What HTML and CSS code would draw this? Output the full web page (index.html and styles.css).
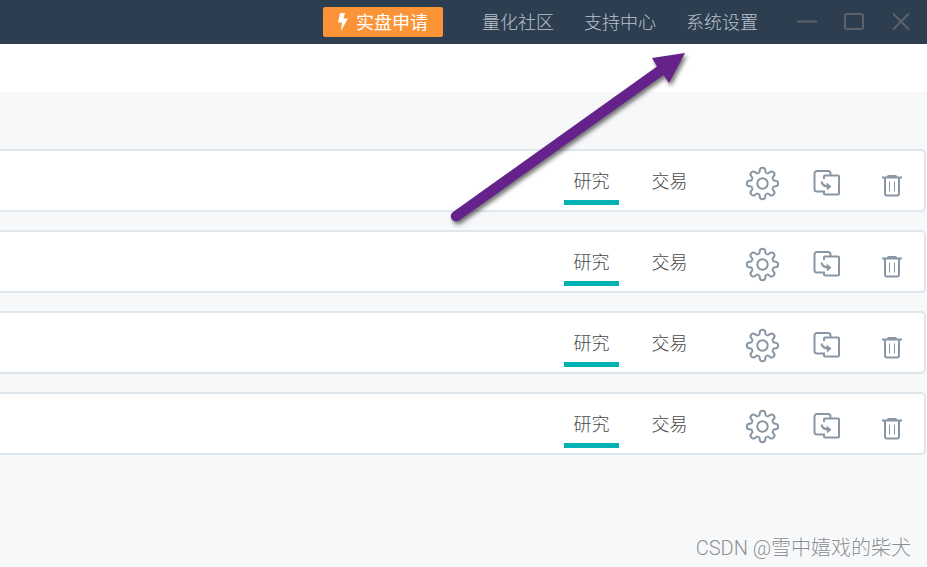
FILE: index.html
```html
<!DOCTYPE html>
<html lang="zh-CN">
<head>
<meta charset="utf-8">
<title>量化策略</title>
<link rel="stylesheet" href="styles.css">
</head>
<body>
<svg class="symbols" aria-hidden="true">
  <symbol id="gear" viewBox="0 0 34 36">
    <g transform="translate(17.5 17.5)">
      <path id="tooth" d="M-4.500-10.900C-3-10.300-2.900-11.500-2.800-13C-2.700-14.700-1.600-15.700 0-15.700S2.700-14.700 2.800-13C2.900-11.500 3-10.300 4.500-10.900"/>
      <use href="#tooth" transform="rotate(45)"/>
      <use href="#tooth" transform="rotate(90)"/>
      <use href="#tooth" transform="rotate(135)"/>
      <use href="#tooth" transform="rotate(180)"/>
      <use href="#tooth" transform="rotate(225)"/>
      <use href="#tooth" transform="rotate(270)"/>
      <use href="#tooth" transform="rotate(315)"/>
      <circle r="5.2"/>
    </g>
  </symbol>
  <symbol id="copy" viewBox="0 0 34 36">
    <path d="M20.500 9V7.500a2.500 2.500 0 0 0-2.500-2.500H7A2.500 2.500 0 0 0 4.500 7.500v15.500A2.500 2.500 0 0 0 7 25.500H14v2q0 1 1 1H28q1 0 1-1V10.500q0-1-1-1H15q-1 0-1 1V13"/>
    <path d="M11.500 15.500c.4 3 3 5 7.500 5"/>
    <path class="solid" d="M16.500 16.500l5 4-4.500 4z"/>
  </symbol>
  <symbol id="trash" viewBox="0 0 34 36">
    <path d="M7 11.500H27M10 11.500V27.500a2 2 0 0 0 2 2H22a2 2 0 0 0 2-2V11.500"/>
    <path class="solid" d="M12 11.500V10.500q0-1.500 1.500-1.500h7q1.500 0 1.500 1.500v1z"/>
    <path class="thin" d="M14.500 15.500v10M19.500 15.500v10"/>
  </symbol>
</svg>

<header class="titlebar">
  <button class="apply" type="button">
    <svg width="11" height="20" viewBox="0 0 11 20" aria-hidden="true"><path d="M3 2H8L6.500 7.500H11L4 20 5 11.500H1z"/></svg>
    实盘申请
  </button>
  <nav class="links">
    <a href="#community">量化社区</a>
    <a href="#support">支持中心</a>
    <a href="#settings">系统设置</a>
  </nav>
  <div class="window-controls">
    <button type="button" aria-label="最小化"><svg width="20" height="20" viewBox="0 0 20 20"><path d="M0 9.500H20"/></svg></button>
    <button type="button" aria-label="最大化"><svg width="20" height="20" viewBox="0 0 20 20"><rect x="1" y="2" width="18" height="15" rx="2"/></svg></button>
    <button type="button" aria-label="关闭"><svg width="20" height="20" viewBox="0 0 20 20"><path d="M2 1.500L18 17.500M18 1.500L2 17.500"/></svg></button>
  </div>
</header>
<div class="toolbar"></div>

<main class="strategies">
  <article class="card">
    <div class="tabs"><button class="tab active" type="button">研究</button><button class="tab" type="button">交易</button></div>
    <div class="actions">
      <button type="button" aria-label="设置"><svg width="34" height="36"><use href="#gear"/></svg></button>
      <button type="button" aria-label="复制"><svg width="34" height="36"><use href="#copy"/></svg></button>
      <button type="button" aria-label="删除"><svg width="34" height="36"><use href="#trash"/></svg></button>
    </div>
  </article>
  <article class="card">
    <div class="tabs"><button class="tab active" type="button">研究</button><button class="tab" type="button">交易</button></div>
    <div class="actions">
      <button type="button" aria-label="设置"><svg width="34" height="36"><use href="#gear"/></svg></button>
      <button type="button" aria-label="复制"><svg width="34" height="36"><use href="#copy"/></svg></button>
      <button type="button" aria-label="删除"><svg width="34" height="36"><use href="#trash"/></svg></button>
    </div>
  </article>
  <article class="card">
    <div class="tabs"><button class="tab active" type="button">研究</button><button class="tab" type="button">交易</button></div>
    <div class="actions">
      <button type="button" aria-label="设置"><svg width="34" height="36"><use href="#gear"/></svg></button>
      <button type="button" aria-label="复制"><svg width="34" height="36"><use href="#copy"/></svg></button>
      <button type="button" aria-label="删除"><svg width="34" height="36"><use href="#trash"/></svg></button>
    </div>
  </article>
  <article class="card">
    <div class="tabs"><button class="tab active" type="button">研究</button><button class="tab" type="button">交易</button></div>
    <div class="actions">
      <button type="button" aria-label="设置"><svg width="34" height="36"><use href="#gear"/></svg></button>
      <button type="button" aria-label="复制"><svg width="34" height="36"><use href="#copy"/></svg></button>
      <button type="button" aria-label="删除"><svg width="34" height="36"><use href="#trash"/></svg></button>
    </div>
  </article>
</main>

<svg class="pointer" width="250" height="190" viewBox="0 0 250 190" aria-hidden="true">
  <path d="M238 9L222 39 216.500 31 12 176.500A5.200 5.200 0 0 1 6 168L210 22.500 205 14z"/>
</svg>
<div class="watermark">CSDN @雪中嬉戏的柴犬</div>
</body>
</html>
```

FILE: styles.css
```css
* {
  box-sizing: border-box;
}

body {
  margin: 0;
  min-height: 100vh;
  background: #f6f8fa;
  color: #484848;
  font-family: "Noto Sans CJK SC", sans-serif;
  font-size: 18px;
  font-weight: 300;
  line-height: 28px;
}

button {
  margin: 0;
  padding: 0;
  border: 0;
  background: none;
  color: inherit;
  font: inherit;
}

svg {
  display: block;
}

.symbols {
  position: absolute;
  width: 0;
  height: 0;
}

.titlebar {
  display: flex;
  justify-content: flex-end;
  align-items: center;
  height: 44px;
  padding-right: 16px;
  background: #2d3e50;
}

.apply {
  display: flex;
  align-items: center;
  gap: 8px;
  height: 30px;
  padding: 0 15px 2px 14px;
  border-radius: 2px;
  background: #fb9337;
  color: #fff;
  font-weight: 400;
}

.apply svg {
  fill: #fff;
}

.links {
  display: flex;
  gap: 30px;
  margin: 0 39px;
  padding-bottom: 2px;
}

.links a {
  color: #b9c3cc;
  text-decoration: none;
}

.window-controls {
  display: flex;
  gap: 27px;
}

.window-controls svg {
  fill: none;
  stroke: #5d626a;
  stroke-width: 2;
}

.toolbar {
  height: 48px;
  background: #fff;
}

.strategies {
  display: grid;
  gap: 18px;
  padding: 57px 1px 0 0;
}

.card {
  display: flex;
  justify-content: flex-end;
  align-items: flex-start;
  gap: 48px;
  height: 63px;
  padding-right: 15px;
  border: 2px solid #dfe7ed;
  border-left: 0;
  border-radius: 0 5px 5px 0;
  background: #fff;
}

.tabs {
  display: flex;
  gap: 23px;
}

.tab {
  width: 55px;
  padding: 15px 0 6px;
  border-bottom: 5px solid transparent;
}

.tab.active {
  border-color: #00b2b2;
}

.actions {
  display: flex;
  gap: 31px;
  padding-top: 15px;
  fill: none;
  stroke: #8996a3;
  stroke-width: 2;
}

.solid {
  fill: #8996a3;
  stroke: none;
}

.thin {
  stroke-width: 1;
}

.pointer {
  position: absolute;
  top: 44px;
  left: 447px;
  fill: #64228a;
  filter: drop-shadow(2px 3px 2px rgba(0, 0, 0, 0.55));
  pointer-events: none;
}

.watermark {
  position: absolute;
  right: 16px;
  bottom: 5px;
  color: #8b8e91;
  font-family: Roboto, "Noto Sans CJK SC", sans-serif;
  font-size: 20px;
  text-shadow: -1px -1px 0 #fff;
}
```
